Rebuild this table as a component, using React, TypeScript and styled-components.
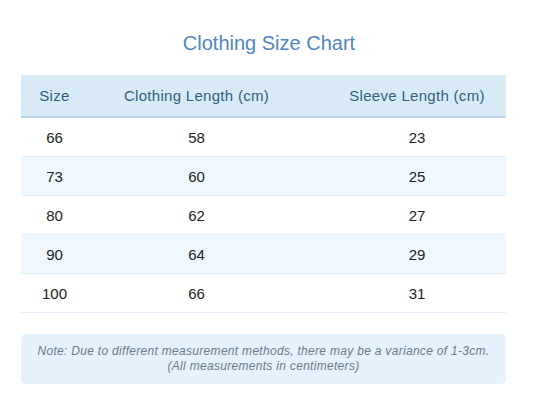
import React from 'react';
import styled, { createGlobalStyle } from 'styled-components';

const GlobalStyle = createGlobalStyle`
  body {
    margin: 0;
    background: #ffffff;
    font-family: 'Liberation Sans', Arial, sans-serif;
  }
`;

const Page = styled.div`
  width: 538px;
`;

const Title = styled.h2`
  margin: 0;
  padding: 32px 0 20px;
  font-size: 20px;
  line-height: 23px;
  font-weight: 400;
  text-align: center;
  color: #4f86bd;
`;

const Content = styled.div`
  width: 485px;
  margin-left: 21px;
`;

const Table = styled.table`
  width: 100%;
  border-collapse: collapse;
  table-layout: fixed;
`;

const HeadCell = styled.th<{ $shift?: number }>`
  background: #d9eaf7;
  color: #2f5f82;
  font-size: 15px;
  font-weight: 400;
  letter-spacing: 0.3px;
  line-height: 17px;
  padding: 12px 0 12px ${(p) => p.$shift || 0}px;
  text-align: center;
  border-bottom: 2px solid #b8d6ee;
`;

const Row = styled.tr<{ $alt: boolean }>`
  background: ${(p) => (p.$alt ? '#f0f8ff' : '#ffffff')};
`;

const Cell = styled.td<{ $shift?: number }>`
  color: #222;
  font-size: 15px;
  line-height: 17px;
  padding: 11px 0 10px ${(p) => p.$shift || 0}px;
  text-align: center;
  border-bottom: 1px solid #e2eef8;
`;

const Note = styled.div`
  margin-top: 21px;
  background: #e3f2fd;
  border-radius: 5px;
  padding: 10px 12px 10px;
  text-align: center;
  font-size: 12px;
  letter-spacing: 0.3px;
  line-height: 15px;
  font-style: italic;
  color: #6c7b88;
`;

const sizes = [
  [66, 58, 23],
  [73, 60, 25],
  [80, 62, 27],
  [90, 64, 29],
  [100, 66, 31]
];

const widths = [67, 217, 201];
const shifts = [0, 0, 23];

export default function App() {
  return (
    <Page>
      <GlobalStyle />
      <Title>Clothing Size Chart</Title>
      <Content>
        <Table>
          <colgroup>
            {widths.map((w, i) => (
              <col key={i} style={{ width: w }} />
            ))}
          </colgroup>
          <thead>
            <tr>
              <HeadCell>Size</HeadCell>
              <HeadCell>Clothing Length (cm)</HeadCell>
              <HeadCell $shift={shifts[2]}>Sleeve Length (cm)</HeadCell>
            </tr>
          </thead>
          <tbody>
            {sizes.map((r, i) => (
              <Row key={i} $alt={i % 2 === 1}>
                {r.map((v, j) => (
                  <Cell key={j} $shift={shifts[j]}>
                    {v}
                  </Cell>
                ))}
              </Row>
            ))}
          </tbody>
        </Table>
        <Note>
          Note: Due to different measurement methods, there may be a variance of 1-3cm.
          <br />
          (All measurements in centimeters)
        </Note>
      </Content>
    </Page>
  );
}
